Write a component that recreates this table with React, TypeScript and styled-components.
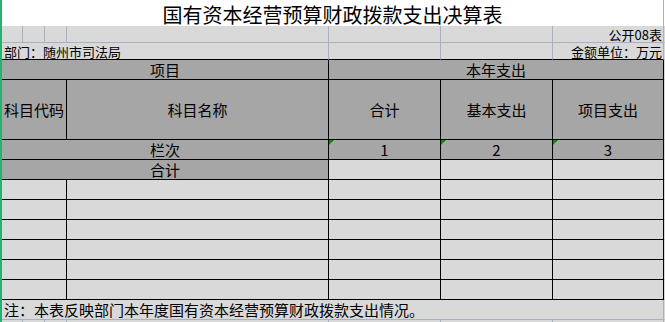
import styled, { createGlobalStyle, css } from "styled-components";

const GlobalStyle = createGlobalStyle`
  html, body {
    margin: 0;
    padding: 0;
    background: #d9d9d9;
    overflow: hidden;
  }
  body {
    font-family: "Noto Sans CJK SC", "Liberation Sans", sans-serif;
    color: #000;
  }
`;

const GRID_LINE = "#a9b0c3";
const HEAD_BG = "#a6a6a6";
const CELL_BG = "#d9d9d9";

type Line = "grid" | "black" | "none";
type Align = "left" | "center" | "right";

const lineColor = (l: Line) =>
  l === "grid" ? GRID_LINE : l === "black" ? "#000" : "transparent";

const Page = styled.div`
  display: flex;
  height: 322px;
  overflow: hidden;
`;

const FreezeBar = styled.div`
  flex: none;
  width: 2px;
  background: #20b46e;
`;

const Sheet = styled.div`
  flex: 1;
  display: flex;
  flex-direction: column;
`;

const Row = styled.div<{ $h: number }>`
  display: grid;
  grid-template-columns: 21px 22px 22px 262px 112px 112px 111px 1fr;
  height: ${(p) => p.$h}px;
  flex: none;
`;

const Cell = styled.div<{
  $span?: number;
  $bg?: string;
  $right?: Line;
  $bottom?: Line;
  $align?: Align;
  $bottomAlign?: boolean;
  $size?: number;
  $mark?: boolean;
}>`
  grid-column: span ${(p) => p.$span ?? 1};
  box-sizing: border-box;
  position: relative;
  display: flex;
  align-items: ${(p) => (p.$bottomAlign ? "flex-end" : "center")};
  justify-content: ${(p) =>
    p.$align === "left" ? "flex-start" : p.$align === "right" ? "flex-end" : "center"};
  padding: ${(p) => (p.$align === "left" ? "0 0 0 2px" : p.$align === "right" ? "0 1px 0 0" : "0")};
  background: ${(p) => p.$bg ?? CELL_BG};
  border-right: 1px solid ${(p) => lineColor(p.$right ?? "grid")};
  border-bottom: 1px solid ${(p) => lineColor(p.$bottom ?? "grid")};
  font-size: ${(p) => p.$size ?? 15}px;
  line-height: ${(p) => Math.round((p.$size ?? 15) * 1.15)}px;
  white-space: nowrap;
  ${(p) =>
    p.$mark &&
    css`
      &::before {
        content: "";
        position: absolute;
        top: 0;
        left: 0;
        border-top: 5px solid #0a8a0a;
        border-right: 5px solid transparent;
      }
    `}
`;

const Title = styled(Cell)`
  align-items: flex-start;
  font-size: 20px;
  line-height: normal;
`;

const HeadCell = styled(Cell).attrs({ $bg: HEAD_BG, $right: "black", $bottom: "black" })``;

const DataCell = styled(Cell).attrs({ $right: "black", $bottom: "black" })``;

const Filler = styled(Cell).attrs({ $right: "none" })``;

const dataRows = [0, 1, 2, 3, 4, 5];

export default function App() {
  return (
    <>
      <GlobalStyle />
      <Page>
        <FreezeBar />
        <Sheet>
          <Row $h={26}>
            <Title $span={7} $bg="#fff">
              国有资本经营预算财政拨款支出决算表
            </Title>
            <Filler $bg="#fff" />
          </Row>

          <Row $h={17}>
            <Cell />
            <Cell />
            <Cell />
            <Cell />
            <Cell />
            <Cell />
            <Cell $align="right" $size={13} $bottomAlign>
              公开08表
            </Cell>
            <Filler />
          </Row>

          <Row $h={17}>
            <Cell $span={4} $align="left" $size={13} $bottom="black" $bottomAlign>
              部门：随州市司法局
            </Cell>
            <Cell $bottom="black" />
            <Cell $bottom="black" />
            <Cell $align="right" $size={13} $bottom="black" $bottomAlign>
              金额单位：万元
            </Cell>
            <Filler />
          </Row>

          <Row $h={20}>
            <HeadCell $span={4}>项目</HeadCell>
            <HeadCell $span={3}>本年支出</HeadCell>
            <Filler />
          </Row>

          <Row $h={60}>
            <HeadCell $span={3}>科目代码</HeadCell>
            <HeadCell>科目名称</HeadCell>
            <HeadCell>合计</HeadCell>
            <HeadCell>基本支出</HeadCell>
            <HeadCell>项目支出</HeadCell>
            <Filler />
          </Row>

          <Row $h={20}>
            <HeadCell $span={4}>栏次</HeadCell>
            <HeadCell $mark>1</HeadCell>
            <HeadCell $mark>2</HeadCell>
            <HeadCell $mark>3</HeadCell>
            <Filler />
          </Row>

          <Row $h={20}>
            <HeadCell $span={4}>合计</HeadCell>
            <DataCell />
            <DataCell />
            <DataCell />
            <Filler />
          </Row>

          {dataRows.map((r) => (
            <Row $h={20} key={r}>
              <DataCell $span={3} />
              <DataCell />
              <DataCell />
              <DataCell />
              <DataCell />
              <Filler />
            </Row>
          ))}

          <Row $h={20}>
            <Cell $span={7} $align="left">
              注：本表反映部门本年度国有资本经营预算财政拨款支出情况。
            </Cell>
            <Filler />
          </Row>

          <Row $h={20}>
            <Cell />
            <Cell />
            <Cell />
            <Cell />
            <Cell />
            <Cell />
            <Cell />
            <Filler />
          </Row>
        </Sheet>
      </Page>
    </>
  );
}
